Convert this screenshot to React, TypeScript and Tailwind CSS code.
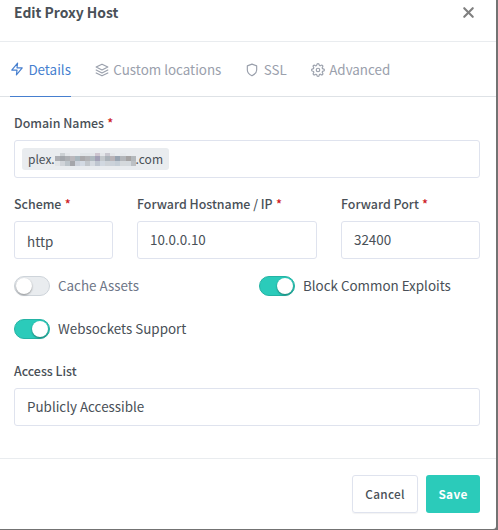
import type { ReactNode } from "react";
import { FiZap, FiLayers, FiShield, FiSettings, FiX } from "react-icons/fi";

// Pixelated block that hides the middle of the domain name
const mosaic = [
  { height: "h-[3px]", cells: ["#e9ecef", "#ccd1d4", "#e4e7ea", "#e9ecef", "#e9ecef", "#e2e6e9", "#e2e6e9", "#e4e7ea", "#cfc6d0", "#e4e7ea", "#c9c8d0", "#e4e7ea", "#e9ecef", "#e6e9ec", "#e9ecef", "#e9ecef"] },
  { height: "h-[5px]", cells: ["#acaeb3", "#a3a7ac", "#adb0b4", "#bab8bc", "#a9b6bd", "#aaa9ab", "#b1b2b5", "#b0bac0", "#a3a1b6", "#c3c8cc", "#aab2b9", "#b9b4b8", "#98a4b1", "#b3b6ba", "#a5a3a3", "#b3b8bc"] },
  { height: "h-[5px]", cells: ["#e2e5e8", "#d0d4d9", "#bcc4ca", "#a5a6aa", "#cdd2db", "#d3dae3", "#c2c7cc", "#d5dae0", "#bfc6d0", "#d1d8e0", "#ced3d8", "#cbd2da", "#c5ced7", "#d5d9dc", "#d4d9dd", "#bcc0c4"] },
];

function Label({ children, required }: { children: ReactNode; required?: boolean }) {
  return (
    <div className="h-[21px] whitespace-nowrap text-[12.4px] leading-[21px] font-medium">
      {children}
      {required && <span className="ml-[0.5px] text-[#cd201f]"> *</span>}
    </div>
  );
}

function Field({ children, select }: { children: ReactNode; select?: boolean }) {
  return (
    <div
      className={
        select
          ? "mt-[6px] flex h-[38px] items-center rounded-[3px] border border-[#dfe3ee] px-3 pt-px"
          : "mt-[6px] flex h-[38px] items-center rounded-[3px] border border-[#dfe3ee] px-3 pb-[2px]"
      }
    >
      {children}
    </div>
  );
}

function Toggle({ on, children }: { on?: boolean; children: ReactNode }) {
  return (
    <div className="flex h-5 flex-1 items-center gap-2">
      <span
        className={
          on
            ? "flex h-5 w-9 items-center justify-end rounded-full border border-[#24b3a4] bg-[#2bcbba] px-px"
            : "flex h-5 w-9 items-center rounded-full border border-[#ced4da] bg-[#e9ecef] px-px"
        }
      >
        <span className="size-4 rounded-full bg-white shadow-[0_1px_2px_rgba(0,0,0,0.4)]" />
      </span>
      <span className={on ? "pb-[2px]" : "pb-[2px] text-[#6e7687]"}>{children}</span>
    </div>
  );
}

function Tab({ icon, active, children }: { icon: ReactNode; active?: boolean; children: ReactNode }) {
  return (
    <div
      className={
        active
          ? "flex h-[55px] items-center gap-[4.4px] border-b border-[#467fcf] text-[#467fcf]"
          : "flex h-[55px] items-center gap-[4.4px] text-[#9aa0ac]"
      }
    >
      {icon}
      <span className={active ? "pb-px" : "pb-[2px]"}>{children}</span>
    </div>
  );
}

export default function App() {
  return (
    <div className="flex h-[530px] w-[498px] overflow-hidden bg-[#737373] font-['Noto_Sans_CJK_SC','Noto_Sans',sans-serif] text-[13.4px] leading-5 text-[#495057]">
      <main className="flex h-[529px] w-[496px] flex-col rounded-br-[3px] bg-white">
        <header className="flex h-[42px] items-start justify-between border-b border-[#e9ecef] pr-[19px] pl-[14px]">
          <h1 className="mt-[2px] text-[13.9px] font-bold">Edit Proxy Host</h1>
          <FiX className="mt-1 size-[17px] text-[#808080]" strokeWidth={3} />
        </header>
        <nav className="flex h-[55px] gap-[24px] border-b border-[#dee2e6] pl-[10px] whitespace-nowrap">
          <Tab active icon={<FiZap className="size-[14px]" />}>Details</Tab>
          <Tab icon={<FiLayers className="size-[14px]" />}>Custom locations</Tab>
          <Tab icon={<FiShield className="size-[14px]" />}>SSL</Tab>
          <Tab icon={<FiSettings className="size-[14px]" />}>Advanced</Tab>
        </nav>
        <section className="h-[361px] pt-4 pr-4 pl-[14px]">
          <Label required>Domain Names</Label>
          <div className="mt-[6px] flex h-[38px] items-center rounded-[3px] border border-[#dfe3ee] px-[7px]">
            <div className="flex h-[22px] w-[147px] items-center rounded-[3px] bg-[#e9ecef] px-[6px] text-[12px]">
              <span className="pb-px">plex.</span>
              <div className="flex flex-1 flex-col">
                {mosaic.map((row, y) => (
                  <div key={y} className={`flex ${row.height}`}>
                    {row.cells.map((c, x) => (
                      <span key={x} className="flex-1" style={{ backgroundColor: c }} />
                    ))}
                  </div>
                ))}
              </div>
              <span className="pb-px">.com</span>
            </div>
          </div>
          <div className="mt-4 grid grid-cols-[99px_180px_139px] gap-6">
            <div><Label required>Scheme</Label><Field select>http</Field></div>
            <div><Label required>Forward Hostname / IP</Label><Field>10.0.0.10</Field></div>
            <div><Label required>Forward Port</Label><Field>32400</Field></div>
          </div>
          <div className="mt-[17px] flex w-[490px]">
            <Toggle>Cache Assets</Toggle>
            <Toggle on>Block Common Exploits</Toggle>
          </div>
          <div className="mt-[23px] flex">
            <Toggle on>Websockets Support</Toggle>
          </div>
          <div className="mt-[22px]">
            <Label>Access List</Label>
            <Field>Publicly Accessible</Field>
          </div>
        </section>
        <footer className="flex flex-1 justify-end gap-2 border-t border-[#e9ecef] pt-4 pr-4 text-[11.8px] font-medium">
          <button className="h-[38px] w-[66px] rounded-[3px] border border-[#dfe3ee] tracking-[0.3px] shadow-[0_1px_1px_rgba(0,0,0,0.05)]">Cancel</button>
          <button className="h-[38px] w-[54px] rounded-[3px] bg-[#2bcbba] font-bold tracking-[0.3px] text-white">Save</button>
        </footer>
      </main>
    </div>
  );
}
